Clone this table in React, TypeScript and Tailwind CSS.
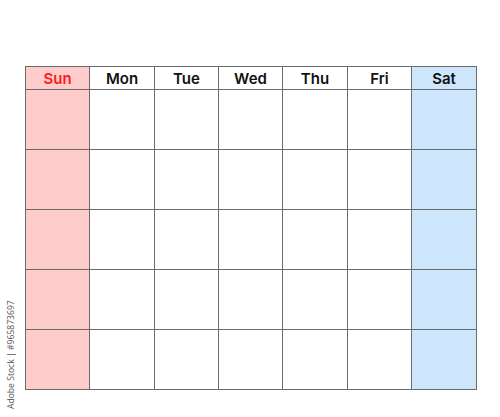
import React from "react";

const days = ["Sun", "Mon", "Tue", "Wed", "Thu", "Fri", "Sat"];

function cellBg(i: number) {
  if (i === 0) return "bg-[#ffcccc]";
  if (i === 6) return "bg-[#cde6fc]";
  return "bg-white";
}

export default function App() {
  return (
    <div
      className="relative w-[500px] h-[417px] bg-white pl-[25px] pt-[66px]"
      style={{ fontFamily: "Inter, 'Noto Sans', sans-serif" }}
    >
      <div className="grid w-[452px] grid-cols-[64px_65px_64px_64px_65px_64px_65px] grid-rows-[23px_60px_60px_60px_60px_60px] border-l border-t border-[#6b6b6b]">
        {days.map((d, i) => (
          <div
            key={d}
            className={`flex items-center justify-center border-r border-b border-[#6b6b6b] text-[15px] font-semibold leading-none ${cellBg(i)} ${
              i === 0 ? "text-[#ff1a1a]" : "text-[#111]"
            }`}
          >
            {d}
          </div>
        ))}
        {Array.from({ length: 35 }).map((_, k) => (
          <div
            key={k}
            className={`border-r border-b border-[#6b6b6b] ${cellBg(k % 7)}`}
          />
        ))}
      </div>
      <div
        className="absolute left-[5px] top-[409px] origin-top-left -rotate-90 whitespace-nowrap text-[8.6px] leading-[12px] text-[#555]"
        style={{ fontFamily: "'Open Sans', 'Noto Sans', sans-serif" }}
      >
        Adobe Stock | #965873697
      </div>
    </div>
  );
}
